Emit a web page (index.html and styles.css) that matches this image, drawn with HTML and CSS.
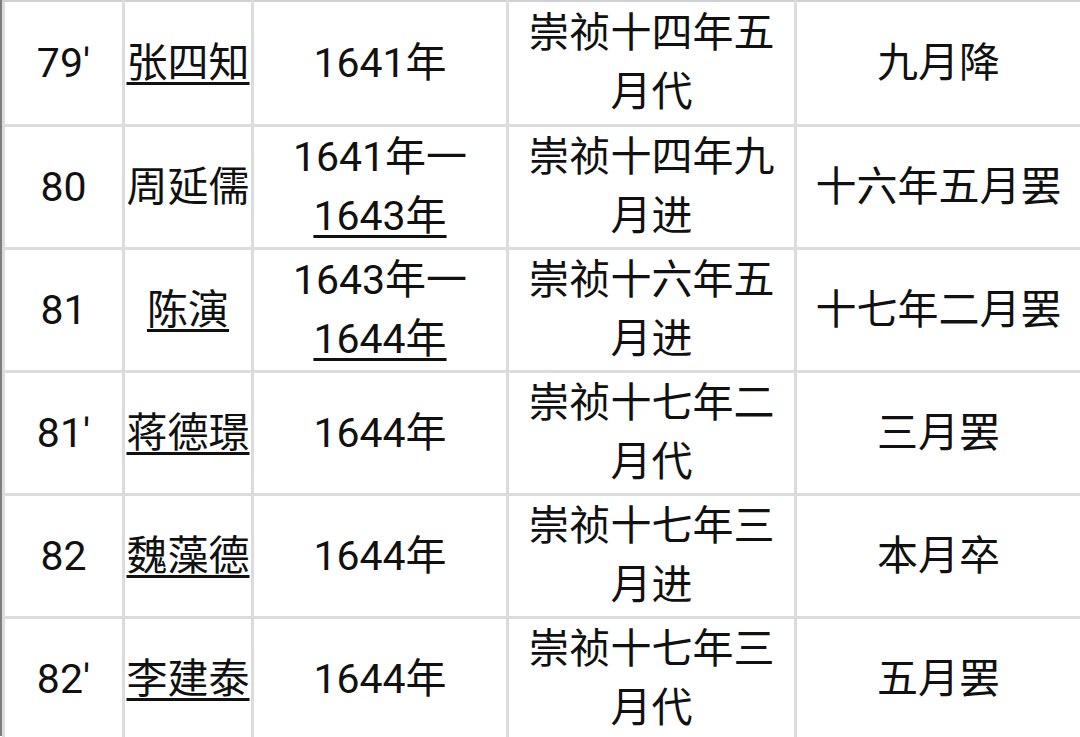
FILE: index.html
```html
<!DOCTYPE html>
<html lang="zh-CN">
<head>
<meta charset="utf-8">
<title>明朝首辅</title>
<link rel="stylesheet" href="styles.css">
</head>
<body>
<div class="page">
<table class="list">
  <colgroup>
    <col class="c-no">
    <col class="c-name">
    <col class="c-year">
    <col class="c-in">
    <col class="c-out">
  </colgroup>
  <tbody>
    <tr>
      <td>79'</td>
      <td><span class="link">张四知</span></td>
      <td>1641年</td>
      <td>崇祯十四年五月代</td>
      <td>九月降</td>
    </tr>
    <tr>
      <td>80</td>
      <td>周延儒</td>
      <td>1641年一<span class="link">1643年</span></td>
      <td>崇祯十四年九月进</td>
      <td>十六年五月罢</td>
    </tr>
    <tr>
      <td>81</td>
      <td><span class="link">陈演</span></td>
      <td>1643年一<span class="link">1644年</span></td>
      <td>崇祯十六年五月进</td>
      <td>十七年二月罢</td>
    </tr>
    <tr>
      <td>81'</td>
      <td><span class="link">蒋德璟</span></td>
      <td>1644年</td>
      <td>崇祯十七年二月代</td>
      <td>三月罢</td>
    </tr>
    <tr>
      <td>82</td>
      <td><span class="link">魏藻德</span></td>
      <td>1644年</td>
      <td>崇祯十七年三月进</td>
      <td>本月卒</td>
    </tr>
    <tr>
      <td>82'</td>
      <td><span class="link">李建泰</span></td>
      <td>1644年</td>
      <td>崇祯十七年三月代</td>
      <td>五月罢</td>
    </tr>
  </tbody>
</table>
</div>
</body>
</html>
```

FILE: styles.css
```css
html, body {
  margin: 0;
  padding: 0;
  background: #ffffff;
}

body {
  width: 1080px;
  height: 737px;
  overflow: hidden;
  font-family: Roboto, "Noto Sans CJK SC", sans-serif;
  color: #111111;
}

.page {
  border-left: 2px solid #7d7d7d;
  height: 737px;
  box-sizing: border-box;
}

.list {
  border-collapse: collapse;
  table-layout: fixed;
  width: 1078px;
  margin-top: -1px;
}

.c-no { width: 120px; }
.c-name { width: 129px; }
.c-year { width: 255px; }
.c-in { width: 288px; }
.c-out { width: 286px; }

.list tr {
  height: 123px;
}

.list tr:first-child {
  height: 125px;
}

.list td {
  border: 3px solid #dcdcdc;
  padding: 0;
  text-align: center;
  vertical-align: middle;
  font-size: 41px;
  line-height: 59px;
}

.list tr:first-child td {
  border-top-color: #cfcfd8;
}

.link {
  text-decoration: underline;
  text-decoration-thickness: 3px;
  text-underline-offset: 5px;
}
```
